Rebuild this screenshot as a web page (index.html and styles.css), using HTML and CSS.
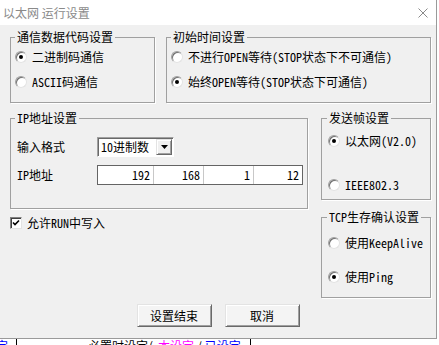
FILE: index.html
```html
<!DOCTYPE html>
<html lang="zh-CN">
<head>
    <meta charset="UTF-8">
    <title>以太网 运行设置</title>
    <link rel="stylesheet" href="styles.css">
</head>
<body>
    <div class="dialog">
        <div class="titlebar">
            <span class="title">以太网 运行设置</span>
            <svg class="close" width="10" height="10" viewBox="0 0 10 10">
                <path d="M0.5 0.5L9.5 9.5M9.5 0.5L0.5 9.5" stroke="#8a8a8a" stroke-width="1" fill="none"/>
            </svg>
        </div>

        <div class="client">
            <div class="row-top">
                <fieldset class="group g-code">
                    <legend>通信数据代码设置</legend>
                    <div class="opt first"><span class="radio on"></span>二进制码通信</div>
                    <div class="opt second"><span class="radio"></span>ASCII码通信</div>
                </fieldset>
                <fieldset class="group g-open">
                    <legend>初始时间设置</legend>
                    <div class="opt first"><span class="radio"></span>不进行OPEN等待(STOP状态下不可通信)</div>
                    <div class="opt second"><span class="radio on"></span>始终OPEN等待(STOP状态下可通信)</div>
                </fieldset>
            </div>

            <div class="row-main">
                <div class="col-left">
                    <fieldset class="group g-ip">
                        <legend>IP地址设置</legend>
                        <div class="field-row fmt">
                            <span class="field-label">输入格式</span>
                            <div class="select">
                                <span>10进制数</span>
                                <span class="drop">
                                    <svg width="7" height="4" viewBox="0 0 7 4"><path d="M0 0H7L3.5 4Z" fill="#000"/></svg>
                                </span>
                            </div>
                        </div>
                        <div class="field-row addr">
                            <span class="field-label">IP地址</span>
                            <div class="ipbox">
                                <span class="ipcell c1">192</span>
                                <span class="ipcell c2">168</span>
                                <span class="ipcell c3">1</span>
                                <span class="ipcell c4">12</span>
                            </div>
                        </div>
                    </fieldset>
                    <div class="check-row">
                        <span class="checkbox">
                            <svg width="8" height="8" viewBox="0 0 8 8"><path d="M1 3.5L3 5.5L7 1.5" stroke="#000" stroke-width="1.6" fill="none"/></svg>
                        </span>
                        允许RUN中写入
                    </div>
                </div>

                <div class="col-right">
                    <fieldset class="group g-frame">
                        <legend>发送帧设置</legend>
                        <div class="opt first"><span class="radio on"></span>以太网(V2.0)</div>
                        <div class="opt second"><span class="radio"></span>IEEE802.3</div>
                    </fieldset>
                    <fieldset class="group g-tcp">
                        <legend>TCP生存确认设置</legend>
                        <div class="opt first"><span class="radio"></span>使用KeepAlive</div>
                        <div class="opt second"><span class="radio on"></span>使用Ping</div>
                    </fieldset>
                </div>
            </div>
        </div>

        <div class="actions">
            <button type="button">设置结束</button>
            <button type="button">取消</button>
        </div>
    </div>

    <div class="under">
        <span class="u-blue u-first">定</span>
        <span class="u-bar"></span>
        <span class="u-text">必置时设定</span>
        <span class="u-paren">(</span>
        <span class="u-pink">本设定</span>
        <span class="u-slash">/</span>
        <span class="u-blue">已设定</span>
        <span class="u-bar u-last"></span>
    </div>
</body>
</html>
```

FILE: styles.css
```css
* {
    box-sizing: border-box;
}

body {
    margin: 0;
    width: 439px;
    height: 345px;
    overflow: hidden;
    background-color: #fff;
    font-family: "Noto Sans Mono CJK SC", "Noto Sans CJK SC", sans-serif;
    font-size: 12px;
    line-height: 14px;
    color: #000;
}

.dialog {
    width: 437px;
    height: 339px;
    background-color: #f0f0f0;
    border-right: 1px solid #9a9a9a;
    border-bottom: 1px solid #9a9a9a;
    display: flex;
    flex-direction: column;
}

/* title bar */
.titlebar {
    height: 25px;
    flex-shrink: 0;
    background-color: #fff;
    display: flex;
    align-items: center;
    justify-content: space-between;
    padding: 0 8px 0 3px;
}

.title {
    color: #8a8a8a;
    font-family: "Noto Sans CJK SC", sans-serif;
    font-size: 12px;
}

.close {
    display: block;
}

/* client area */
.client {
    padding: 5px 0 0 10px;
}

.row-top {
    display: flex;
    gap: 11px;
}

.group {
    margin: 0;
    padding: 0 0 0 4px;
    border: 1px solid #a0a0a0;
    box-shadow: 1px 1px 0 #fff;
    min-width: 0;
}

.group legend {
    padding: 0 2px;
    line-height: 14px;
}

.g-code {
    width: 145px;
    height: 73px;
}

.g-open {
    width: 265px;
    height: 73px;
}

.opt {
    display: flex;
    align-items: center;
    gap: 5px;
    height: 14px;
    white-space: nowrap;
}

.g-code .first, .g-open .first {
    margin-top: 6px;
}

.g-code .second, .g-open .second {
    margin-top: 11px;
}

.radio {
    width: 12px;
    height: 12px;
    flex-shrink: 0;
    border-radius: 50%;
    background-color: #fff;
    border: 1px solid;
    border-color: #a0a0a0 #e3e3e3 #e3e3e3 #a0a0a0;
    box-shadow: inset 1px 1px 0 #707070;
    display: flex;
    align-items: center;
    justify-content: center;
}

.radio.on::after {
    content: "";
    width: 4px;
    height: 4px;
    border-radius: 50%;
    background-color: #000;
}

/* second row */
.row-main {
    display: flex;
    margin-top: 8px;
}

.col-left {
    width: 298px;
}

.col-right {
    width: 110px;
    margin-left: 13px;
}

.g-ip {
    width: 298px;
    height: 98px;
}

.field-row {
    display: flex;
    align-items: center;
    height: 20px;
}

.field-row.fmt {
    margin-top: 12px;
}

.field-row.addr {
    margin-top: 8px;
}

.field-label {
    width: 82px;
    padding-left: 2px;
    flex-shrink: 0;
}

.select {
    width: 77px;
    height: 20px;
    background-color: #fff;
    border: 1px solid;
    border-color: #a0a0a0 #fff #fff #a0a0a0;
    box-shadow: inset 1px 1px 0 #696969;
    display: flex;
    align-items: center;
    justify-content: space-between;
    padding: 1px 1px 1px 3px;
}

.drop {
    width: 16px;
    height: 16px;
    background-color: #f0f0f0;
    border: 1px solid;
    border-color: #e3e3e3 #696969 #696969 #e3e3e3;
    box-shadow: inset 1px 1px 0 #fff, inset -1px -1px 0 #a0a0a0;
    display: flex;
    align-items: center;
    justify-content: center;
}

.ipbox {
    display: flex;
    width: 206px;
    height: 20px;
    background-color: #fff;
    border: 1px solid #646464;
}

.ipcell {
    text-align: right;
    padding-right: 3px;
    line-height: 18px;
    border-right: 1px solid #c8c8c8;
}

.c1 { width: 56px; }
.c2 { width: 50px; }
.c3 { width: 50px; }
.c4 { width: 48px; border-right: none; }

.check-row {
    display: flex;
    align-items: center;
    gap: 5px;
    height: 14px;
    margin-top: 7px;
}

.checkbox {
    width: 12px;
    height: 12px;
    background-color: #fff;
    border: 1px solid;
    border-color: #808080 #e3e3e3 #e3e3e3 #808080;
    box-shadow: inset 1px 1px 0 #404040;
    display: flex;
    align-items: center;
    justify-content: center;
}

.g-frame {
    width: 110px;
    height: 89px;
    padding-left: 5px;
}

.g-frame .opt, .g-tcp .opt {
    margin-left: 1px;
}

.g-frame .first {
    margin-top: 9px;
}

.g-frame .second {
    margin-top: 30px;
}

.g-tcp {
    width: 110px;
    height: 88px;
    margin-top: 10px;
    padding-left: 5px;
}

.g-tcp .first {
    margin-top: 12px;
}

.g-tcp .second {
    margin-top: 20px;
}

/* buttons */
.actions {
    display: flex;
    justify-content: center;
    gap: 13px;
    margin-top: 6px;
}

.actions button {
    width: 75px;
    height: 23px;
    padding: 0;
    font-family: "Noto Sans CJK SC", sans-serif;
    font-size: 12px;
    color: #000;
    background-color: #f4f4f4;
    border: 1px solid;
    border-color: #e3e3e3 #696969 #696969 #e3e3e3;
    box-shadow: inset 1px 1px 0 #fff, inset -1px -1px 0 #a0a0a0;
}

/* window behind the dialog */
.under {
    display: flex;
    align-items: center;
    height: 14px;
    white-space: nowrap;
    font-family: "Noto Sans CJK SC", sans-serif;
}

.u-first {
    margin-left: -4px;
}

.u-blue {
    color: #0000ff;
}

.u-pink {
    color: #ff00ff;
    margin-left: 5px;
}

.u-bar {
    width: 1px;
    height: 14px;
    background-color: #000;
    margin-left: 8px;
}

.u-text {
    margin-left: 71px;
}

.u-paren {
    margin-left: 1px;
}

.u-slash {
    margin: 0 3px;
}

.u-last {
    margin-left: 9px;
}
```
